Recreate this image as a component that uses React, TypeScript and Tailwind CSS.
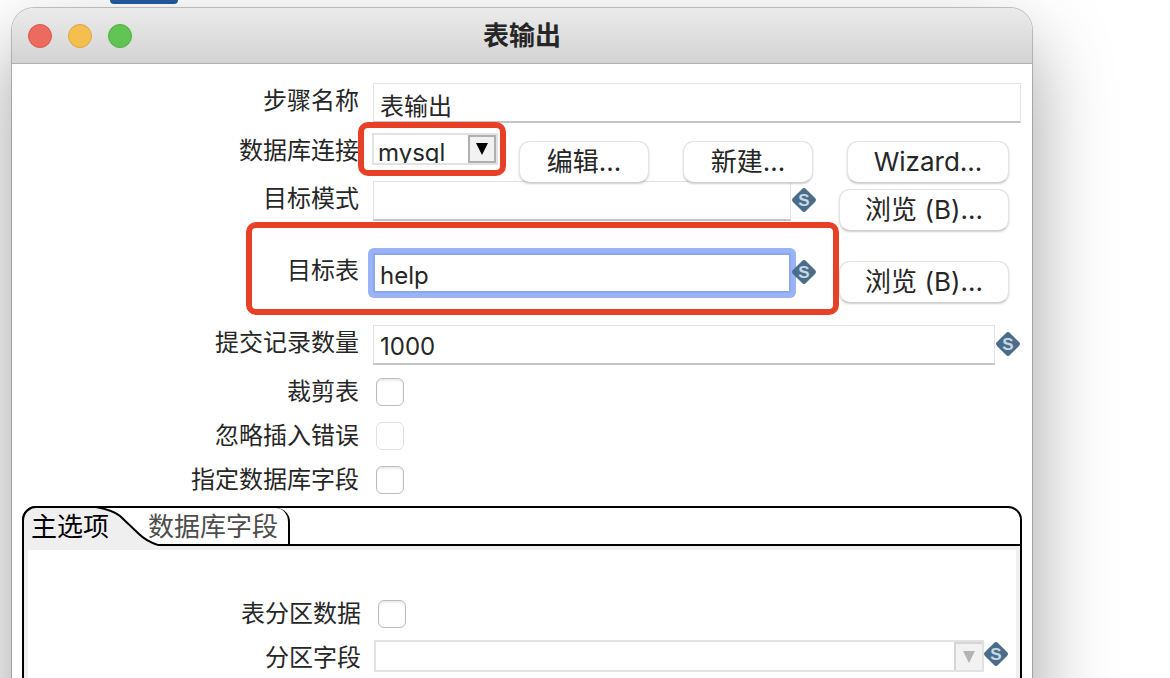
import type { ReactNode } from 'react';
import clsx from 'clsx';

const FIELD =
  'h-10 min-w-0 flex-1 border border-[#e3e3e3] border-b-2 border-b-[#c4c4c4] bg-white px-1.5 pt-1 text-2xl text-[#262626] outline-none';

function Label({ htmlFor, children }: { htmlFor: string; children: ReactNode }) {
  return (
    <label htmlFor={htmlFor} className="w-[347px] shrink-0 text-right text-2xl leading-9">
      {children}
    </label>
  );
}

function PushButton({ children, className }: { children: ReactNode; className?: string }) {
  return (
    <button
      type="button"
      className={clsx(
        'h-[42px] shrink-0 rounded-[11px] border border-[#e4e4e4] border-b-[#cfcfcf] bg-white text-[26px] leading-9 whitespace-nowrap shadow-[0_1px_2px_rgba(0,0,0,0.2)]',
        className
      )}
    >
      {children}
    </button>
  );
}

function VariableIcon({ className }: { className?: string }) {
  return (
    <svg viewBox="0 0 24 24" aria-hidden="true" className={clsx('size-6 shrink-0', className)}>
      <path
        d="M9.8 1.2a3 3 0 0 1 4.4 0l8.6 8.6a3 3 0 0 1 0 4.4l-8.6 8.6a3 3 0 0 1-4.4 0L1.2 14.2a3 3 0 0 1 0-4.4z"
        fill="#4b6d89"
      />
      <text
        x="12"
        y="18"
        textAnchor="middle"
        fontSize="17"
        fontWeight="700"
        fontFamily="Liberation Sans, sans-serif"
        fill="#c5d9e8"
      >
        S
      </text>
    </svg>
  );
}

function CheckRow({ id, label, disabled }: { id: string; label: string; disabled?: boolean }) {
  return (
    <div className="flex h-7 items-center">
      <Label htmlFor={id}>{label}</Label>
      <Check id={id} disabled={disabled} />
    </div>
  );
}

function Check({ id, disabled }: { id: string; disabled?: boolean }) {
  return (
    <input
      id={id}
      type="checkbox"
      disabled={disabled}
      className={clsx(
        'ml-[17px] size-7 shrink-0 appearance-none rounded-md border bg-white',
        disabled ? 'border-[#e0e0e0]' : 'border-[#bcbcbc] shadow-[inset_0_2px_2px_rgba(0,0,0,0.08)]'
      )}
    />
  );
}

function Combo({
  id,
  value,
  disabled,
  className,
}: {
  id: string;
  value: string;
  disabled?: boolean;
  className?: string;
}) {
  return (
    <div className={clsx('flex h-8 overflow-hidden border-2 border-[#e2e2e2] bg-white', className)}>
      <div className="relative min-w-0 flex-1">
        <select
          id={id}
          disabled={disabled}
          defaultValue={value}
          className="h-9 w-full appearance-none bg-transparent pl-1 text-2xl outline-none"
        >
          <option value={value}>{value}</option>
        </select>
        <span
          className={clsx(
            'pointer-events-none absolute top-0 right-0 flex h-7 w-7 items-center justify-center bg-[#f2f2f2]',
            disabled ? 'border-t-2 border-l-2 border-[#d6d6d6]' : 'border-2 border-[#b0b0b0]'
          )}
        >
          <svg viewBox="0 0 12 12" className="size-3" aria-hidden="true">
            <path d="M0 0h12L6 12z" fill={disabled ? '#b4b4b4' : '#000'} />
          </svg>
        </span>
      </div>
    </div>
  );
}

function TitleBar() {
  return (
    <header className="relative flex h-14 items-center rounded-t-[22px] border-b border-[#b0b0b0] bg-linear-to-b from-[#ebebeb] to-[#d3d3d3] pl-4">
      <div className="flex gap-4">
        <button type="button" aria-label="关闭" className="size-6 rounded-full border border-[#d9564c] bg-[#ed6a5f]" />
        <button type="button" aria-label="最小化" className="size-6 rounded-full border border-[#dca63f] bg-[#f5bf4f]" />
        <button type="button" aria-label="缩放" className="size-6 rounded-full border border-[#51ac43] bg-[#61c554]" />
      </div>
      <h1 className="pointer-events-none absolute inset-x-0 text-center text-[26px] leading-10 font-bold">表输出</h1>
    </header>
  );
}

function TabFolder() {
  return (
    <section className="mx-2.5 mt-3 flex flex-1 flex-col">
      <div
        role="tablist"
        className="relative flex h-10 items-start rounded-t-[14px] border-2 border-black text-[26px] leading-[38px]"
      >
        {/* active tab slopes down into the baseline */}
        <svg
          viewBox="0 0 136 40"
          className="absolute -top-0.5 -left-0.5 h-10 w-[136px]"
          fill="none"
          aria-hidden="true"
        >
          <path
            d="M1 40V15Q1 8 6 4Q9 1 14 1H74C84 3 92 5 98 10L117 28C122 33 130 37 136 39V40Z"
            fill="#efefef"
          />
          <path
            d="M1 40V15Q1 8 6 4Q9 1 14 1H74C84 3 92 5 98 10L117 28C122 33 130 37 136 39"
            stroke="#000"
            strokeWidth="2"
          />
        </svg>
        <button type="button" role="tab" aria-selected="true" className="relative pl-[7px] text-black">
          主选项
        </button>
        <button
          type="button"
          role="tab"
          aria-selected="false"
          className="ml-[39px] h-9 rounded-tr-[14px] border-r-2 border-black pr-2.5 text-[#4d4d4d]"
        >
          数据库字段
        </button>
      </div>
      <div role="tabpanel" className="flex-1 border-x-2 border-black">
        <div className="h-full border-x-4 border-t-4 border-[#efefef] pt-[50px]">
          <div className="flex h-7 items-center">
            <label htmlFor="partition" className="w-[333px] shrink-0 text-right text-2xl leading-9">
              表分区数据
            </label>
            <Check id="partition" />
          </div>
          <div className="mt-3 flex items-start pr-2">
            <label htmlFor="partition-field" className="w-[333px] shrink-0 text-right text-2xl leading-9">
              分区字段
            </label>
            <Combo id="partition-field" value="" disabled className="ml-[13px] flex-1" />
            <VariableIcon className="mt-0.5" />
          </div>
        </div>
      </div>
    </section>
  );
}

export default function App() {
  return (
    <div className="relative flex h-screen overflow-hidden bg-white pt-2 pr-[138px] pl-3 font-[Inter,'Noto_Sans_CJK_SC',sans-serif] text-[#262626]">
      <div className="absolute top-0 left-[110px] h-1 w-[68px] rounded-b-lg bg-[#2459a0]" />
      <main className="relative -mb-24 flex flex-1 flex-col rounded-t-[22px] bg-white shadow-[0_0_0_1px_rgba(0,0,0,0.22),0_36px_80px_rgba(0,0,0,0.38)]">
        <TitleBar />
        <form className="pt-[19px] pr-[11px]">
          <div className="flex h-[50px] items-start">
            <Label htmlFor="step">步骤名称</Label>
            <input id="step" defaultValue="表输出" className={clsx(FIELD, 'ml-3.5')} />
          </div>

          <div className="relative z-10 flex h-12 items-start">
            <Label htmlFor="connection">数据库连接</Label>
            <div className="relative ml-[13px] w-[126px] shrink-0">
              <Combo id="connection" value="mysql" />
              <div className="pointer-events-none absolute -inset-y-[11px] -right-2 -left-3.5 rounded-[10px] border-6 border-[#e64027]" />
            </div>
            <div className="mt-2 flex flex-1 justify-end gap-[34px] pr-3">
              <PushButton className="w-[130px]">编辑...</PushButton>
              <PushButton className="w-[130px]">新建...</PushButton>
              <PushButton className="w-[162px]">Wizard...</PushButton>
            </div>
          </div>

          <div className="flex h-[72px] items-start pr-3">
            <Label htmlFor="schema">目标模式</Label>
            <input id="schema" className={clsx(FIELD, 'ml-3.5')} />
            <VariableIcon className="mt-[7px] ml-px" />
            <PushButton className="mt-2 ml-[23px] w-[170px]">浏览 (B)...</PushButton>
          </div>

          <div className="relative flex h-[72px] items-start pr-3">
            <Label htmlFor="table">目标表</Label>
            <input
              id="table"
              defaultValue="help"
              className="ml-3.5 h-10 min-w-0 flex-1 rounded-xs border-2 border-[#8ba8ea] bg-white px-[5px] pt-1 text-2xl shadow-[0_0_0_5px_#98b4f6] outline-none"
            />
            <VariableIcon className="relative mt-[7px] ml-px" />
            <PushButton className="mt-2 ml-[23px] w-[170px]">浏览 (B)...</PushButton>
            <div className="pointer-events-none absolute -top-[31px] right-[182px] left-[234px] h-[93px] rounded-[10px] border-6 border-[#e64027]" />
          </div>

          <div className="flex h-[53px] items-start pr-px">
            <Label htmlFor="commit">提交记录数量</Label>
            <input id="commit" defaultValue="1000" className={clsx(FIELD, 'ml-3.5')} />
            <VariableIcon className="mt-[7px] ml-px" />
          </div>

          <div className="flex flex-col gap-4">
            <CheckRow id="truncate" label="裁剪表" />
            <CheckRow id="ignore" label="忽略插入错误" disabled />
            <CheckRow id="specify" label="指定数据库字段" />
          </div>
        </form>
        <TabFolder />
      </main>
    </div>
  );
}
